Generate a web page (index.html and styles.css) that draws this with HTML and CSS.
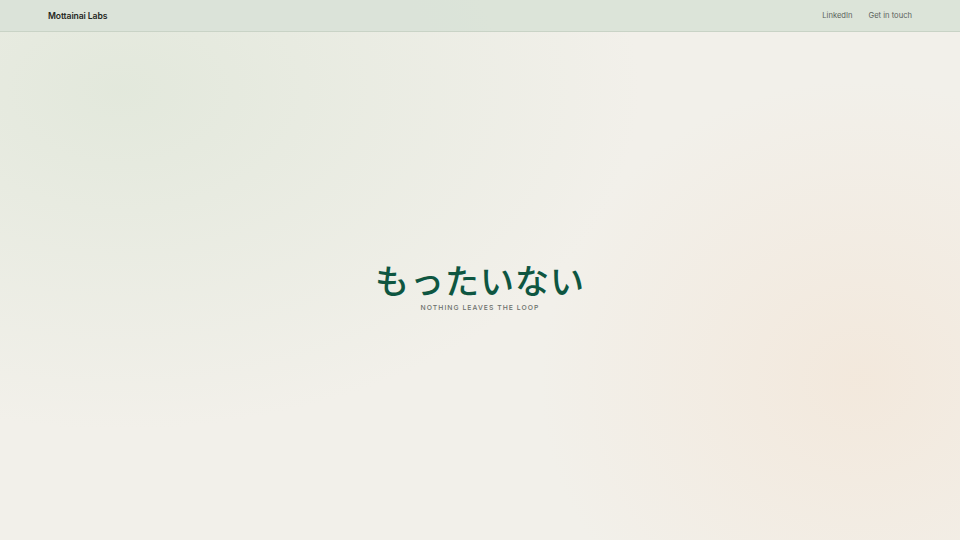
FILE: index.html
```html
<!DOCTYPE html>
<html lang="en">
<head>
<meta charset="utf-8">
<title>Mottainai Labs</title>
<link rel="stylesheet" href="styles.css">
</head>
<body>
<div class="page">
  <header class="topbar">
    <div class="brand">Mottainai Labs</div>
    <nav class="links">
      <a href="#">LinkedIn</a>
      <a href="#">Get in touch</a>
    </nav>
  </header>
  <main class="hero">
    <h1 class="title">もったいない</h1>
    <p class="tagline">NOTHING LEAVES THE LOOP</p>
  </main>
</div>
</body>
</html>
```
FILE: styles.css
```css
html, body {
  margin: 0;
  padding: 0;
  height: 100%;
}
body {
  font-family: Inter, "Noto Sans", sans-serif;
  background: #f2f0ea;
}
.page {
  height: 540px;
  display: flex;
  flex-direction: column;
  background:
    radial-gradient(ellipse 520px 340px at 120px 90px, rgba(220, 229, 214, 0.7), rgba(220, 229, 214, 0) 100%),
    radial-gradient(ellipse 320px 300px at 860px 380px, rgba(243, 230, 216, 0.75), rgba(243, 230, 216, 0) 100%),
    #f2f0ea;
}
.topbar {
  height: 32px;
  box-sizing: border-box;
  border-bottom: 1px solid #c9d3c6;
  background: rgba(218, 227, 216, 0.95);
  display: flex;
  align-items: center;
  justify-content: space-between;
  padding: 0 48px;
}
.brand {
  font-size: 8.6px;
  font-weight: 600;
  color: #1f2622;
  letter-spacing: -0.1px;
}
.links {
  display: flex;
  gap: 16px;
}
.links a {
  font-size: 7.6px;
  color: #5b625c;
  text-decoration: none;
}
.hero {
  flex: 1;
  display: flex;
  flex-direction: column;
  align-items: center;
  justify-content: center;
}
.title {
  margin: 0;
  font-family: "Noto Sans CJK JP", sans-serif;
  font-weight: 500;
  font-size: 34px;
  line-height: 40px;
  color: #0e5641;
  letter-spacing: 1px;
}
.tagline {
  margin: 3px 0 0;
  font-size: 6.8px;
  line-height: 9px;
  letter-spacing: 1.05px;
  color: #6b6f6b;
  font-weight: 500;
}
```
